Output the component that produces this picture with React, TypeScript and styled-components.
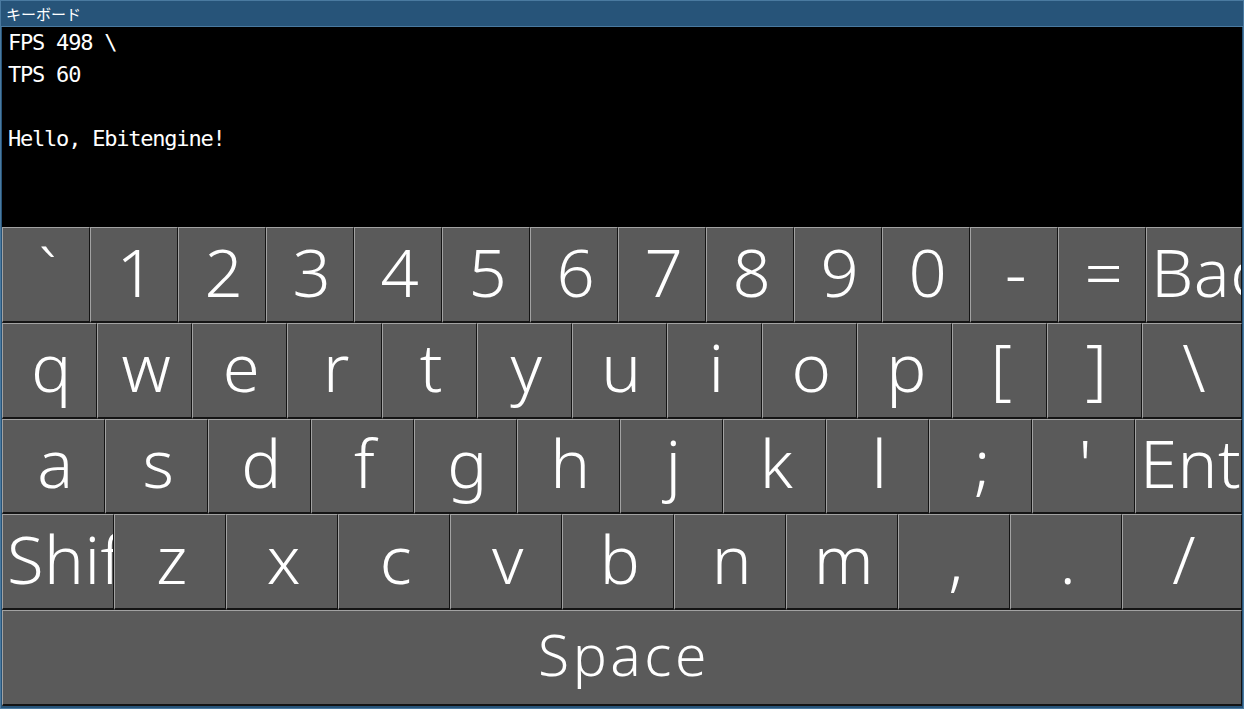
import React from "react";
import styled, { createGlobalStyle } from "styled-components";

const Global = createGlobalStyle`
  html, body { margin: 0; padding: 0; background: #275479; }
  * { box-sizing: border-box; }
`;

const Window = styled.div`
  width: 1244px;
  height: 709px;
  display: flex;
  flex-direction: column;
  background: #275479;
  border: 1px solid #4a7aa0;
  padding: 0 1px 2px 1px;
  overflow: hidden;
`;

const TitleBar = styled.div`
  height: 26px;
  flex: none;
  display: flex;
  align-items: center;
  padding: 0 0 1px 5px;
  border-bottom: 1px solid #4a7aa0;
  margin: 0 -1px;
  color: #ffffff;
  font-family: "Noto Sans CJK JP", "Noto Sans", sans-serif;
  font-size: 15px;
  line-height: 1;
`;

const Screen = styled.div`
  height: 200px;
  flex: none;
  background: #000000;
  color: #ffffff;
  font-family: "DejaVu Sans Mono", "Liberation Mono", monospace;
  font-size: 22px;
  letter-spacing: -1.22px;
  line-height: 32px;
  padding: 0 0 0 6px;
  white-space: pre;
`;

const Keyboard = styled.div`
  flex: 1;
  display: flex;
  flex-direction: column;
  background: #141414;
`;

const Row = styled.div<{ $w: number }>`
  flex: 1 1 0;
  min-height: 0;
  display: flex;
  & > * {
    flex: 0 0 ${(p) => p.$w}px;
  }
  & > *:last-child {
    flex: 1 1 0;
  }
`;

const Key = styled.div<{ $small?: boolean }>`
  min-width: 0;
  display: flex;
  align-items: center;
  overflow: hidden;
  background: #5a5a5a;
  border-top: 1px solid #a2a2a2;
  border-left: 1px solid #a2a2a2;
  border-right: 1px solid #141414;
  border-bottom: 2px solid #141414;
  color: #ffffff;
  font-family: "Noto Sans", "Open Sans", sans-serif;
  font-weight: 350;
  font-size: ${(p) => (p.$small ? "57px" : "67px")};
  letter-spacing: ${(p) => (p.$small ? "3.5px" : "0.5px")};
`;

const Label = styled.span`
  flex: 1 1 0;
  min-width: 0;
  display: block;
  text-align: center;
  white-space: nowrap;
  line-height: 1.25;
  padding: 0 0 6px 4px;
`;

const rows: { w: number; keys: string[] }[] = [
  { w: 88, keys: ["`", "1", "2", "3", "4", "5", "6", "7", "8", "9", "0", "-", "=", "Back"] },
  { w: 95, keys: ["q", "w", "e", "r", "t", "y", "u", "i", "o", "p", "[", "]", "\\"] },
  { w: 103, keys: ["a", "s", "d", "f", "g", "h", "j", "k", "l", ";", "'", "Enter"] },
  { w: 112, keys: ["Shift", "z", "x", "c", "v", "b", "n", "m", ",", ".", "/"] },
];

export default function App() {
  return (
    <>
      <Global />
      <Window>
        <TitleBar>キーボード</TitleBar>
        <Screen>{"FPS 498 \\\nTPS 60\n\nHello, Ebitengine!"}</Screen>
        <Keyboard>
          {rows.map((r, i) => (
            <Row key={i} $w={r.w}>
              {r.keys.map((k) => (
                <Key key={k}>
                  <Label>{k}</Label>
                </Key>
              ))}
            </Row>
          ))}
          <Row $w={1240}>
            <Key $small>
              <Label>Space</Label>
            </Key>
          </Row>
        </Keyboard>
      </Window>
    </>
  );
}
